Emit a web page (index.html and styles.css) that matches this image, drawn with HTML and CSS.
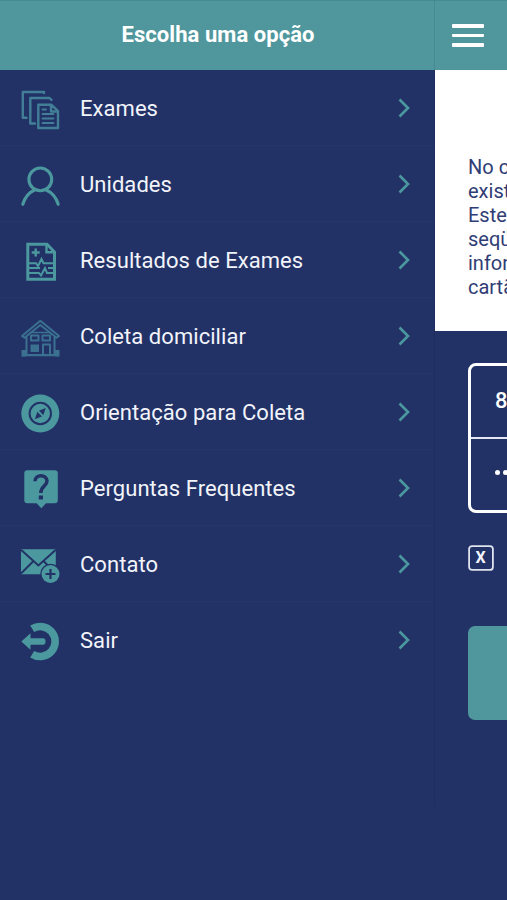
FILE: index.html
```html
<!DOCTYPE html>
<html lang="pt-BR">
<head>
<meta charset="utf-8">
<title>Escolha uma opção</title>
<link rel="stylesheet" href="styles.css">
</head>
<body>
<div class="app">
  <nav class="drawer">
    <header class="drawer-title">Escolha uma opção</header>
    <ul class="menu">
      <li class="item">
        <svg class="icon dim" viewBox="0 0 44 44"><g fill="none" stroke="currentColor" stroke-width="2.4" stroke-linejoin="round" stroke-linecap="round"><path d="M26 5V4H4.8V29.8H8.5M33.5 12L31.5 10H12.3V35.5H17M20.3 16.8H33.5L40 23V40H20.3ZM33 17V23.5H39.5"/><path stroke-width="1.8" d="M24.5 21.5H28M24.5 26H35.5M24.5 30.5H35.5M24.5 35H35.5"/></g></svg>
        <span class="label">Exames</span><svg class="chevron" viewBox="0 0 12 20"><path d="M1.5 1.5L10 10L1.5 18.5"/></svg>
      </li>
      <li class="item">
        <svg class="icon" viewBox="0 0 44 44"><g fill="none" stroke="currentColor" stroke-width="3.1" stroke-linecap="round"><circle cx="22.3" cy="15.4" r="11.4"/><path d="M4.8 40.3C7 33 11 28.5 16.5 26M28.2 26C34 28.5 38 33 40.2 40.3"/></g></svg>
        <span class="label">Unidades</span><svg class="chevron" viewBox="0 0 12 20"><path d="M1.5 1.5L10 10L1.5 18.5"/></svg>
      </li>
      <li class="item">
        <svg class="icon" viewBox="0 0 44 44"><g fill="none" stroke="currentColor" stroke-width="3"><path d="M9.8 4.2H29L36.5 12V39.3H9.8Z"/><path stroke-width="2.4" d="M28.5 4.5V12.3H36M17.7 8.5V16.5M13.7 12.5H21.7"/><path stroke-width="2" d="M10 23.2H18L20 26L23.5 19L25.5 23.2H36M10 33H21L23 35.5L27 28L29 33H36M10 28H22M30 28H36"/></g></svg>
        <span class="label">Resultados de Exames</span><svg class="chevron" viewBox="0 0 12 20"><path d="M1.5 1.5L10 10L1.5 18.5"/></svg>
      </li>
      <li class="item">
        <svg class="icon dimmer" viewBox="0 0 44 44"><g fill="none" stroke="currentColor" stroke-width="2" stroke-linejoin="round"><path d="M4 20L22.3 4.8L41 20L38.5 21.8L22.3 9L6.5 21.8ZM8.5 21V39H36.5V21M4 39.3H41"/><path d="M13 19.5H20.5V24.5H13ZM24.5 19.5H32V24.5H24.5ZM25 38.5V28.5H32V38.5"/><path stroke-width="1.5" d="M12 16.5H33"/></g><path fill="currentColor" d="M12.5 28.5H21V36H12.5ZM3.5 34H8V40.5H3.5ZM37 34H41.5V40.5H37Z"/></svg>
        <span class="label">Coleta domiciliar</span><svg class="chevron" viewBox="0 0 12 20"><path d="M1.5 1.5L10 10L1.5 18.5"/></svg>
      </li>
      <li class="item">
        <svg class="icon" viewBox="0 0 44 44"><circle cx="22.3" cy="21.5" r="19" fill="currentColor"/><circle class="cut-line" cx="22.3" cy="21.5" r="10.7" stroke-width="2"/><path class="cut" d="M27.8 16L25 24L16.8 27.2L19.6 19.2Z"/><path d="M19.5 18.5L25.2 24.3" stroke="currentColor" stroke-width="1.8"/></svg>
        <span class="label">Orientação para Coleta</span><svg class="chevron" viewBox="0 0 12 20"><path d="M1.5 1.5L10 10L1.5 18.5"/></svg>
      </li>
      <li class="item">
        <svg class="icon" viewBox="0 0 44 44"><path fill="currentColor" d="M9.3 2.3H36.8Q39.8 2.3 39.8 5.3V32.3Q39.8 35.3 36.8 35.3H28L23.3 40.3L18.6 35.3H9.3Q6.3 35.3 6.3 32.3V5.3Q6.3 2.3 9.3 2.3Z"/><path class="cut-line" stroke-width="3.5" d="M17 13.2C17 6 29 6 29 13C29 18.3 22.8 17.5 22.8 25"/><path class="cut" d="M20.8 27.5H25V31.5H20.8Z"/></svg>
        <span class="label">Perguntas Frequentes</span><svg class="chevron" viewBox="0 0 12 20"><path d="M1.5 1.5L10 10L1.5 18.5"/></svg>
      </li>
      <li class="item">
        <svg class="icon" viewBox="0 0 44 44"><path fill="currentColor" d="M3 5.3H37.8V30.3H3Z"/><path class="cut-line" stroke-width="2" d="M3 5.8L20.4 21.5L37.8 5.8M3 29.5L15 17.5M37.8 29.5L26 17.5"/><circle class="cut" cx="32.5" cy="30" r="10.3"/><circle cx="32.5" cy="30" r="9" fill="currentColor"/><path class="cut-line" stroke-width="2.2" d="M32.5 25V35M27.5 30H37.5"/></svg>
        <span class="label">Contato</span><svg class="chevron" viewBox="0 0 12 20"><path d="M1.5 1.5L10 10L1.5 18.5"/></svg>
      </li>
      <li class="item">
        <svg class="icon" viewBox="0 0 44 44"><path fill="none" stroke="currentColor" stroke-width="7.6" d="M14.2 8.8A15 15 0 1 1 14.2 34.2"/><path fill="currentColor" d="M3.3 21.5L12.5 13.3V18.3H25Q27.5 18.3 27.5 21.5T25 24.7H12.5V29.7Z"/></svg>
        <span class="label">Sair</span><svg class="chevron" viewBox="0 0 12 20"><path d="M1.5 1.5L10 10L1.5 18.5"/></svg>
      </li>
    </ul>
  </nav>
  <main class="page">
    <header class="topbar"><div class="burger"><i></i><i></i><i></i></div></header>
    <section class="notice">No c<br>exist<br>Este<br>seqü<br>infor<br>cartã</section>
    <section class="form">
      <div class="fields">
        <div class="field">8</div>
        <div class="field dots"><i></i><i></i></div>
      </div>
      <div class="check"><svg viewBox="0 0 26 26"><rect x="1.1" y="1.1" width="23.8" height="23.8" rx="3"/></svg><b>X</b></div>
      <div class="button"></div>
    </section>
  </main>
</div>
</body>
</html>
```
FILE: styles.css
```css
* { box-sizing: border-box; }
body { margin: 0; background: #223267; font-family: Roboto, "Liberation Sans", sans-serif; }
.app { display: flex; width: 507px; height: 900px; overflow: hidden; background: #223267; }
.drawer { width: 435px; height: 806px; flex: none; border-right: 1px solid #1f2d60; }
.drawer-title {
  height: 70px; margin-right: -1px; padding-left: 2px; border-top: 1px solid #448b91; border-right: 1px solid #458a90;
  background: #4f979d; color: #fff;
  font-size: 22px; font-weight: 700; line-height: 67px; letter-spacing: 0.06px; text-align: center;
}
.menu { margin: 0; padding: 0; list-style: none; }
.item { display: flex; align-items: center; height: 76px; padding: 0 24px 0 18px; border-bottom: 1px solid #26366c; }
.item:last-child { border-bottom: 0; }
.icon { width: 44px; height: 44px; margin-top: 4px; color: #4c989f; }
.dim { color: #427f96; }
.dimmer { color: #3b7090; }
.cut { fill: #223267; }
.cut-line { fill: none; stroke: #223267; }
.label { flex: 1; margin: 2px 0 0 18px; color: #f2f4fa; font-size: 22px; line-height: 30px; letter-spacing: 0.05px; white-space: nowrap; }
.chevron { width: 12px; height: 20px; }
.chevron path { fill: none; stroke: #4c989f; stroke-width: 2.6; }
.page { width: 72px; overflow: hidden; }
.topbar { height: 70px; padding: 23px 0 0 17px; background: #4f979d; border-top: 1px solid #448b91; }
.burger { display: flex; flex-direction: column; gap: 6px; width: 32px; }
.burger i { height: 3.5px; background: #fff; border-radius: 1px; }
.notice { height: 261px; padding: 86px 0 0 33px; background: #fff; color: #303d75; font-size: 20px; line-height: 23.9px; white-space: nowrap; }
.form { padding: 32px 0 0 33px; }
.fields { width: 120px; height: 150px; border: 3px solid #fff; border-radius: 8px; }
.field { height: 73px; padding-left: 24px; color: #fff; font-size: 22px; font-weight: 500; line-height: 69px; border-bottom: 2px solid #e5e8f2; }
.dots { display: flex; gap: 3px; padding-top: 31px; border-bottom: 0; }
.dots i { width: 5px; height: 5px; border-radius: 50%; background: #fff; }
.check { display: grid; width: 26px; height: 26px; margin: 32px 0 0 -0.5px; place-items: center; }
.check > * { grid-area: 1 / 1; }
.check svg { width: 26px; height: 26px; fill: none; stroke: #dfe3ee; stroke-width: 1.8; }
.check b { color: #f3f5fa; font-size: 16px; line-height: 20px; margin-top: -1px; }
.button { width: 160px; height: 94px; margin-top: 55px; border-radius: 7px; background: #4f979d; }
```
